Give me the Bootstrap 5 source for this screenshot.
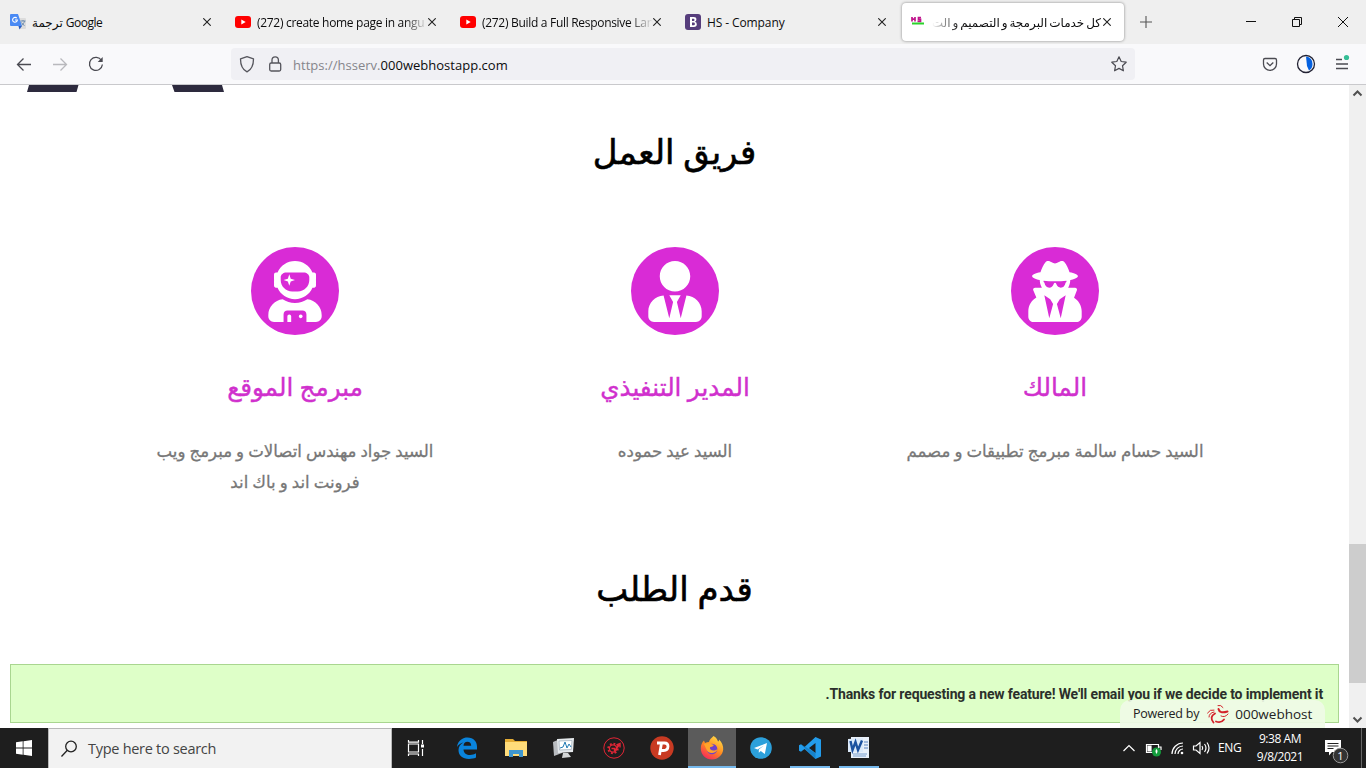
<!DOCTYPE html>
<html lang="en">
<head>
<meta charset="utf-8">
<title>HS Company</title>
<link href="https://cdn.jsdelivr.net/npm/bootstrap@5.3.0/dist/css/bootstrap.min.css" rel="stylesheet">
<style>
body{width:1366px;height:768px;overflow:hidden;background:#fff;font-family:"Open Sans","Noto Sans","DejaVu Sans",sans-serif;font-size:12px;line-height:1.5;color:#0c0c0d}
svg{display:block;flex:none}
.tabstrip{height:44px;background:#efefef}
.tab-item{width:225px;padding:0 10px;height:44px;flex:none}
.tab-item .tab-title{flex:1 1 0;min-width:0;overflow:hidden;white-space:nowrap;margin-left:6px;font-size:12px;letter-spacing:-.3px;position:relative;top:1px}
.fade-end{-webkit-mask-image:linear-gradient(to left,transparent,#000 24px)}
.tab-active{width:222px;height:38px;margin:3px 1px 3px 2px;background:#fff;border-radius:4px;box-shadow:0 0 3px rgba(0,0,0,.45);padding:0 11px 0 8px}
.tab-active .tab-title{margin-left:6px;font-size:12px;letter-spacing:0;word-spacing:-1.2px;-webkit-mask-image:linear-gradient(to right,transparent,#000 28px)}
.toolbar{height:41px;background:#f9f9fb;border-bottom:1px solid #c9c9cc}
.urlbox{width:904px;height:32px;background:#f0f0f4;border-radius:4px;font-size:13px}
.view{height:643px}
.page-body{width:1349px;height:643px;overflow:hidden}
.sbar{width:17px;background:#f0f0f0}
.sthumb{height:139px;background:#cdcdcd}
.peek{height:7px}
.h-main{font-size:34px;line-height:50px;color:#000;font-weight:400;margin:0;-webkit-text-stroke:.6px #000}
.team{padding:0 104px 0 106px}
.member{width:380px;flex:none;text-align:center}
.disc{width:88px;height:88px;background:#d92bd6;border-radius:50%}
.m-name{font-size:24.6px;line-height:36px;color:#d030cd;margin:34px 0 0;font-weight:400;-webkit-text-stroke:.4px #d030cd}
.m-role{font-size:16.6px;line-height:31px;color:#777;margin:30px auto 0;width:320px;word-spacing:-.3px;-webkit-text-stroke:.3px #777}
.notice{height:59px;margin:0 10px;background:#deffc8;border:1px solid #a9d690;font-family:Roboto,sans-serif;font-weight:700;font-size:14px;color:#2b2f2b;padding:1px 15px 0}
.notice-text{letter-spacing:-.15px}
.powered{position:absolute;left:1120px;top:615px;width:205px;height:28px;background:rgba(239,251,230,.92);border-radius:10px 10px 0 0;font-size:12.5px;color:#222}
.host{font-size:13.5px}
.taskbar{height:40px;background:#1e1e1e;color:#fff}
.start-btn,.tsk{width:48px;height:40px;flex:none;display:flex;align-items:center;justify-content:center}
.tsk{width:49px}
.tsk-on{background:#5b5b5b;width:48px;box-shadow:inset 0 -2px #76b9ed}
.tsk-run{box-shadow:inset 0 -2px #76b9ed;width:40px;margin:0 4px 0 5px}
.finder{width:344px;height:40px;background:#f2f2f2;border:1px solid #b8b8b8;border-bottom:0;color:#444;font-size:14.500px;padding-left:11px}
.find-text{letter-spacing:-.28px}
.clockbox{width:60px;font-size:12px;line-height:18px;letter-spacing:-.45px}
</style>
<script src="https://cdn.jsdelivr.net/npm/bootstrap@5.3.0/dist/js/bootstrap.bundle.min.js"></script>
</head>
<body class="d-flex flex-column">
<svg width="0" height="0" class="position-absolute"><defs>
<symbol id="x" viewBox="0 0 8 8"><path d="M.3.3l7.4 7.4M7.7.3L.3 7.7" stroke="#222" stroke-width="1.1"/></symbol>
<symbol id="yt" viewBox="0 0 16 12"><rect width="16" height="12" rx="3" fill="#f00"/><path d="M6.3 3.4v5.2L10.700 6z" fill="#fff"/></symbol>
</defs></svg>

<header>
<div class="tabstrip d-flex">
  <div class="tab-item d-flex align-items-center">
    <svg width="16" height="16" viewBox="0 0 16 16"><path d="M6 4h9a1 1 0 011 1v9a1 1 0 01-1 1H9z" fill="#dcdcdc"/><path d="M1 0h7l4 12H1a1 1 0 01-1-1V1a1 1 0 011-1z" fill="#4a8af4"/><path d="M8.500 12H12l-2.500 3.500z" fill="#2a5cc0"/><path d="M6.800 4.200A2.400 2.400 0 107.400 6H5" fill="none" stroke="#fff" stroke-width="1.100"/><path d="M10.500 7h5M13 6v1m1.500 0c-.4 2-1.500 3.500-3 4.500m0-3c.6 1.200 1.700 2.300 3 3" stroke="#6d8cae" fill="none"/></svg>
    <span class="tab-title" style="letter-spacing:-.5px">ترجمة Google</span><svg width="8" height="8" class="me-1"><use href="#x"/></svg>
  </div>
  <div class="tab-item d-flex align-items-center"><svg width="16" height="12"><use href="#yt"/></svg><span class="tab-title fade-end">(272) create home page in angu</span><svg width="8" height="8" class="me-1"><use href="#x"/></svg></div>
  <div class="tab-item d-flex align-items-center"><svg width="16" height="12"><use href="#yt"/></svg><span class="tab-title fade-end">(272) Build a Full Responsive Lan</span><svg width="8" height="8" class="me-1"><use href="#x"/></svg></div>
  <div class="tab-item d-flex align-items-center"><svg width="16" height="16" viewBox="0 0 16 16"><rect width="16" height="16" rx="3" fill="#563d7c"/><path d="M5 3h3.700q2.700 0 2.700 2.400 0 1.700-1.600 2.300 2 .4 2 2.600 0 2.700-3 2.700H5zM7 7h1.500q1 0 1-1.100t-1-1.100H7zm0 4.200h1.700q1.200 0 1.200-1.300T8.700 8.600H7z" fill="#fff" fill-rule="evenodd"/></svg><span class="tab-title" style="letter-spacing:-.1px">HS - Company</span><svg width="8" height="8" class="ms-1 me-1"><use href="#x"/></svg></div>
  <div class="tab-item tab-active d-flex align-items-center">
    <svg width="16" height="16" viewBox="0 0 16 16"><path d="M2 3v4.500M5 3v4.500M2 5.200h3M11 3.500H8.500v1.800H10.500v2H7.500" stroke="#c0148c" stroke-width="1.700" fill="none"/><path d="M2 9.500h12" stroke="#2bd32b" stroke-width="2"/></svg>
    <span class="tab-title" dir="rtl">كل خدمات البرمجة و التصميم و الت</span><svg width="8" height="8" style="margin:0 2px"><use href="#x"/></svg>
  </div>
  <div class="d-flex align-items-center flex-grow-1">
    <svg width="12" height="12" viewBox="0 0 12 12" style="margin-left:15px"><path d="M6 0v12M0 6h12" stroke="#555" stroke-width="1.100"/></svg>
    <svg width="110" height="12" viewBox="0 0 110 12" style="margin-left:94px" fill="none" stroke="#111"><path d="M0 5.500h10M46.500 3.500h7v7h-7zM48.500 3.500v-2h7v7h-2M92 1l10 10M102 1L92 11"/></svg>
  </div>
</div>
<div class="toolbar d-flex align-items-center">
  <svg width="231" height="40" viewBox="0 0 231 40" fill="none" stroke="#4b4b52" stroke-width="1.300"><path d="M31 20.500H17.500M23.500 14.500l-6 6 6 6"/><path d="M53 20.500h13.500M60.500 14.500l6 6-6 6" stroke="#b9b9bd"/><path d="M101.500 16.500a6.500 6.500 0 10.900 4"/><path d="M102.700 13v5h-5z" fill="#4b4b52" stroke="none"/></svg>
  <div class="urlbox d-flex align-items-center">
    <svg width="62" height="32" viewBox="0 0 62 32" fill="none" stroke="#55555c" stroke-width="1.300"><path d="M16 8.700l6.500 2.200c0 6-1.500 10.300-6.500 13-5-2.700-6.500-7-6.500-13z" stroke-linejoin="round"/><rect x="38.700" y="15" width="11" height="8" rx="1.500"/><path d="M41 15v-3a3.200 3.200 0 016.400 0v3"/></svg>
    <span style="padding-top:3px;letter-spacing:.02px"><span style="color:#85858b">https://hsserv.</span>000webhostapp.com</span>
    <svg class="ms-auto me-2" width="16" height="16" viewBox="0 0 16 16" fill="none" stroke="#4b4b52" stroke-width="1.200" stroke-linejoin="round"><path d="M8 .8l2.200 4.700 5 .7-3.700 3.500.9 5.100L8 12.400l-4.400 2.400.9-5.100L.8 6.200l5-.7z"/></svg>
  </div>
  <svg width="231" height="40" viewBox="0 0 231 40" fill="none" stroke="#4b4b52" stroke-width="1.300"><path d="M130 14.500h10q1.500 0 1.500 1.500v4c0 3.500-3 6.300-6.500 6.300s-6.500-2.800-6.500-6.300v-4q0-1.500 1.500-1.500zM131.700 18.500l3.300 3.200 3.300-3.200"/><circle cx="171" cy="20" r="8.500" stroke="#223"/><path d="M171 12.500q6.500 1 6.500 7.500 0 4.500-3.500 6.500l-2-4.500z" fill="#0561e0" stroke="none"/><path d="M201 15.500h6M201 20h12M201 24.500h12"/><circle cx="211.500" cy="13.500" r="2.600" fill="#35be96" stroke="none"/></svg>
</div>
</header>

<div class="view d-flex position-relative">
  <main class="page-body d-flex flex-column">
    <svg class="peek" width="240" height="7"><path d="M29 0h49.500l-2 7H27zM172 0h50l2 7h-49.500z" fill="#2d2a3e"/></svg>
    <h2 class="h-main text-center" dir="rtl" style="margin-top:34px">فريق العمل</h2>
    <section class="team d-flex flex-row-reverse" style="margin-top:71px;height:316px">
      <div class="member" dir="rtl">
        <div class="disc d-flex align-items-center justify-content-center mx-auto"><svg width="54" height="61" viewBox="0 0 448 512" fill="#fff"><path d="M383.900 308.300l23.900-62.600c4-10.500-3.700-21.700-15-21.700h-58.500c11-18.900 17.800-40.600 17.800-64v-.3c39.200-7.800 64-19.100 64-31.700 0-13.300-27.300-25.100-70.100-33-9.200-32.800-27-65.800-40.600-82.800-9.500-11.900-25.900-15.600-39.500-8.800l-27.600 13.800c-9 4.500-19.600 4.500-28.600 0L182.100 3.400c-13.600-6.800-30-3.100-39.500 8.800-13.500 17-31.400 50-40.600 82.800-42.700 7.900-70 19.700-70 33 0 12.600 24.800 23.900 64 31.700v.3c0 23.400 6.800 45.100 17.800 64H56.300c-11.500 0-19.200 11.700-14.700 22.300l25.800 60.200C27.300 329.800 0 372.700 0 422.400v44.800C0 491.900 20.100 512 44.800 512h358.400c24.700 0 44.800-20.100 44.800-44.800v-44.800c0-48.400-25.800-90.400-64.100-114.100zM176 480l-41.600-192 49.600 32 24 40-32 120zm96 0l-32-120 24-40 49.600-32L272 480zm41.700-298.500c-3.900 11.900-7 24.600-16.500 33.400-10.100 9.300-48 22.400-64-25-2.800-8.400-15.400-8.400-18.300 0-17 50.200-56 32.400-64 25-9.500-8.800-12.700-21.500-16.500-33.400-.8-2.500-6.300-5.700-6.300-5.800v-10.800c28.300 3.600 61 5.800 96 5.800s67.700-2.100 96-5.800v10.800c-.1.100-5.600 3.200-6.400 5.800z"/></svg></div>
        <h4 class="m-name">المالك</h4>
        <p class="m-role">السيد حسام سالمة مبرمج تطبيقات و مصمم</p>
      </div>
      <div class="member" dir="rtl">
        <div class="disc d-flex align-items-center justify-content-center mx-auto"><svg width="54" height="61" viewBox="0 0 448 512" fill="#fff"><path d="M224 256c70.700 0 128-57.300 128-128S294.700 0 224 0 96 57.300 96 128s57.300 128 128 128zm95.800 32.600L272 480l-32-136 32-56h-96l32 56-32 136-47.800-191.400C56.900 292 0 350.300 0 422.400V464c0 26.500 21.500 48 48 48h352c26.500 0 48-21.500 48-48v-41.600c0-72.100-56.900-130.400-128.200-133.800z"/></svg></div>
        <h4 class="m-name">المدير التنفيذي</h4>
        <p class="m-role">السيد عيد حموده</p>
      </div>
      <div class="member" dir="rtl">
        <div class="disc d-flex align-items-center justify-content-center mx-auto"><svg width="54" height="61" viewBox="0 0 448 512" fill="#fff"><path d="M64 224h13.500c24.700 56.500 80.900 96 146.500 96s121.800-39.500 146.500-96H384c8.800 0 16-7.200 16-16v-96c0-8.800-7.200-16-16-16h-13.500C345.800 39.500 289.600 0 224 0S102.200 39.500 77.500 96H64c-8.800 0-16 7.200-16 16v96c0 8.800 7.200 16 16 16zm40-88c0-22.100 21.500-40 48-40h144c26.500 0 48 17.900 48 40v24c0 53-43 96-96 96h-48c-53 0-96-43-96-96v-24zm72 72l12-36 36-12-36-12-12-36-12 36-36 12 36 12 12 36zm151.600 113.400C297.700 340.700 262.200 352 224 352s-73.700-11.300-103.600-30.600C52.900 328.500 0 385 0 454.400v9.600c0 26.500 21.500 48 48 48h80v-64c0-17.700 14.300-32 32-32h128c17.700 0 32 14.300 32 32v64h80c26.500 0 48-21.500 48-48v-9.600c0-69.400-52.900-125.900-120.400-133zM272 448c-8.800 0-16 7.200-16 16s7.200 16 16 16 16-7.200 16-16-7.200-16-16-16zm-96 0c-8.800 0-16 7.200-16 16v48h32v-48c0-8.800-7.200-16-16-16z"/></svg></div>
        <h4 class="m-name">مبرمج الموقع</h4>
        <p class="m-role">السيد جواد مهندس اتصالات و مبرمج ويب<br>فرونت اند و باك اند</p>
      </div>
    </section>
    <h2 class="h-main text-center" dir="rtl">قدم الطلب</h2>
    <div class="notice d-flex align-items-center" dir="rtl" style="margin-top:51px"><span class="notice-text">Thanks for requesting a new feature! We'll email you if we decide to implement it.</span></div>
  </main>
  <div class="powered d-flex align-items-center" style="padding-left:13px">
    <span style="letter-spacing:-.25px">Powered by</span>
    <svg width="24" height="20" viewBox="0 0 24 20" style="margin:0 5px 0 7px" fill="none" stroke="#d3222a" stroke-linecap="round"><path d="M1.500 9Q4 5 8 6M3 13q0-4 5-5" stroke-width="1"/><path d="M7.500 18.500Q3 13 9 9.500" stroke-width="1.800"/><path d="M10 17.500q5 2 8-2" stroke-width="1.800"/><path d="M12.500 5q1 5 9 2.500" stroke-width="2"/><path d="M12 1.500q3-1 5 2M15 12q4 2 7-2" stroke-width="1"/></svg>
    <span class="host">000webhost</span>
  </div>
  <aside class="sbar d-flex flex-column">
    <svg width="17" height="459" viewBox="0 0 17 459"><path d="M4.500 10.500l4-4 4 4" fill="none" stroke="#505050" stroke-width="2"/></svg>
    <div class="sthumb"></div>
    <svg class="mt-auto" width="17" height="17" viewBox="0 0 17 17"><path d="M4.500 6.500l4 4 4-4" fill="none" stroke="#505050" stroke-width="2"/></svg>
  </aside>
</div>

<footer class="taskbar d-flex align-items-center">
  <div class="start-btn"><svg width="16" height="16" viewBox="0 0 16 16" fill="#fff"><path d="M0 2.200l6.700-.9v6.300H0zM7.500 1.200L16 0v7.600H7.500zM0 8.400h6.700v6.300L0 13.800zM7.500 8.400H16V16l-8.500-1.200z"/></svg></div>
  <div class="finder d-flex align-items-center"><svg width="18" height="18" viewBox="0 0 18 18" fill="none" stroke="#222" stroke-width="1.300"><circle cx="11" cy="6.500" r="5.300"/><path d="M7.300 10.300L1.500 16.500"/></svg><span class="find-text" style="margin-left:10px">Type here to search</span></div>
  <div class="tsk" style="width:47px"><svg width="18" height="18" viewBox="0 0 18 18" fill="none" stroke="#fff" stroke-width="1.200"><path d="M1.500 5h10v8h-10zM1.500 1v2.200h10V1M1.500 17v-2h10v2M15.500 1v4M15.500 10v7"/><path d="M14 5.500h3v3h-3z" fill="#fff" stroke="none"/></svg></div>
  <div class="tsk" style="width:55px"><svg width="22" height="22" viewBox="0 0 22 22"><path d="M1 10C2 3 7 .5 11.500.5c6 0 9.500 4 9.500 9v3H7.500c.3 4 3 5.500 6.500 5.500 2.300 0 4.300-.6 6-1.700v4.200c-2 1-4.400 1.400-7 1.400C6.500 21.900 2.500 18.500 2.500 13c0-3.500 2-6 5-7.500C5 6 2.500 7.500 1 10zm6.500-1.200h7.700c0-2.600-1.400-4-3.800-4-2.300 0-3.700 1.600-3.900 4z" fill="#0a84dc"/></svg></div>
  <div class="tsk" style="width:43px"><svg width="22" height="20" viewBox="0 0 22 20"><path d="M0 1h8l2 2h12v15H0z" fill="#e5ad35"/><path d="M0 4h22v14H0z" fill="#ffdc7a"/><path d="M4 19v-7h14v7h-4v-3H8v3z" fill="#3f97cf"/></svg></div>
  <div class="tsk" style="width:54px"><svg width="24" height="22" viewBox="0 0 24 22"><path d="M1 5l7-3 2 14-8 3z" fill="#b9bcc0"/><path d="M5 2l17-1-1 14-15 1z" fill="#e6eaed"/><path d="M7 4l13-.5-.7 9L7.500 13z" fill="#fff" stroke="#99a9b8" stroke-width=".7"/><path d="M8 11l3-1 2-5 2 6 2-4 2 3" fill="none" stroke="#237bb4"/><path d="M11 16h5l3 4-9 1z" fill="#d4d6d7"/></svg></div>
  <div class="tsk" style="width:45px"><svg width="22" height="22" viewBox="0 0 22 22" fill="none" stroke="#e22636"><circle cx="11" cy="11" r="10.200"/><circle cx="10" cy="11.500" r="4.800" stroke-width="1.800" stroke-dasharray="1.880 1.880"/><circle cx="10" cy="11.500" r="3.600" stroke-width="1.300"/><path d="M8.500 11.500h3v3M12 13.500l4-5.500M13.500 8l3.500-1.500v4" stroke-width="1.400"/></svg></div>
  <div class="tsk" style="width:52px"><svg width="24" height="24" viewBox="0 0 24 24"><circle cx="12" cy="12" r="11.700" fill="#c83a22"/><path d="M7 7h7.500q3.500 0 3.500 3.300 0 4.200-4.500 4.200h-2M11.500 7L9.500 19" fill="none" stroke="#fff" stroke-width="2.800"/></svg></div>
  <div class="tsk tsk-on"><svg width="24" height="24" viewBox="0 0 24 24"><defs><linearGradient id="ff" x1=".8" y1="0" x2=".2" y2="1"><stop offset="0" stop-color="#ffe14a"/><stop offset=".5" stop-color="#ff8b20"/><stop offset="1" stop-color="#f5205f"/></linearGradient></defs><path d="M13.500 0c3 1.500 4 4 4.500 5.500 1-.2 1-1 1-2 3 3 4.500 6.500 4.200 10C22.700 19 18 23.500 12 23.500S.8 19 .8 12.500C.8 9 2 6.500 4 4.500l1 2.500q2-1 4-1C9.500 3.500 11.500 2 13.500 0z" fill="url(#ff)"/><circle cx="12" cy="13" r="5.300" fill="#6f40c9"/><path d="M4 8q4-1.500 8 .3l2 .8q-1 2-4 2.200c-1 3 4 4.500 7.500 1.700-1 5-10 6-11.500-.5z" fill="#ffa52a"/></svg></div>
  <div class="tsk"><svg width="22" height="22" viewBox="0 0 22 22"><circle cx="11" cy="11" r="10.800" fill="#2ca0db"/><path d="M4 11l13-5-2.200 11-4-3-2 1.700v-3.200L14 8.500l-6.500 4z" fill="#fff"/></svg></div>
  <div class="tsk tsk-run"><svg width="24" height="24" viewBox="0 0 24 24"><path d="M17.500 1L6.500 11 3 8.300 1 9.300v5.400l2 1L6.500 13l11 10 5.500-2.500v-17zM17.500 7v10L11 12z" fill="#239ceb" fill-rule="evenodd"/><path d="M3 8.300l14.500 14.700V17z" fill="#1174b9" opacity=".65"/></svg></div>
  <div class="tsk tsk-run"><svg width="22" height="22" viewBox="0 0 22 22"><path d="M3 0h18v21H3z" fill="#eaf1fa"/><path d="M5 17h14M5 19h13" stroke="#7ba0ce"/><path d="M0 2l15-1v14L0 15z" fill="#dceafa"/><path d="M2.500 4l2 9 3-8 2.500 8L14 3.500" fill="none" stroke="#1c52a0" stroke-width="2.400"/><path d="M16 5h4M16 8h4M16 11h4" stroke="#5882bf"/></svg></div>
  <svg class="ms-auto" width="98" height="40" viewBox="4 0 98 40" fill="none" stroke="#fff" stroke-width="1.200"><path d="M4.500 23l5.500-5.500 5.500 5.500"/><path d="M27.500 16.500h12v8h-12zM40 19h2v3"/><path d="M29 18h3v5h-3z" fill="#fff"/><circle cx="37.500" cy="24" r="4.500" fill="#149c3c" stroke="none"/><path d="M37.500 21q2 2 0 5-2-3 0-5" fill="#fff" stroke="none"/><path d="M53 26a11 11 0 0111-11M56 26a8 8 0 018-8M59 26a5 5 0 015-5"/><circle cx="63" cy="25" r="1.300" fill="#fff" stroke="none"/><path d="M74.500 18h2.500l4-3.500v11L77 22h-2.500zM83 18q1.500 2 0 4M85.500 16q3 4 0 8M88 14.500q4 5.500 0 11"/></svg>
  <span class="lang-tag" style="width:25px;margin-left:-3px;margin-right:7px;letter-spacing:-.3px">ENG</span>
  <div class="clockbox text-center">9:38 AM<br>9/8/2021</div>
  <svg width="56" height="40" viewBox="0 0 56 40"><path d="M15 12h16v12h-9l-3 3.500V24h-4z" fill="#fff" /><path d="M17.500 15.500h11M17.500 18h11M17.500 20.500h6" stroke="#222"/><circle cx="30.500" cy="27.500" r="7.300" fill="#333" stroke="#999"/><text x="30.500" y="31.500" font-size="11" fill="#fff" text-anchor="middle">1</text><path d="M51.500 0v40" stroke="#666"/></svg>
</footer>
</body>
</html>
